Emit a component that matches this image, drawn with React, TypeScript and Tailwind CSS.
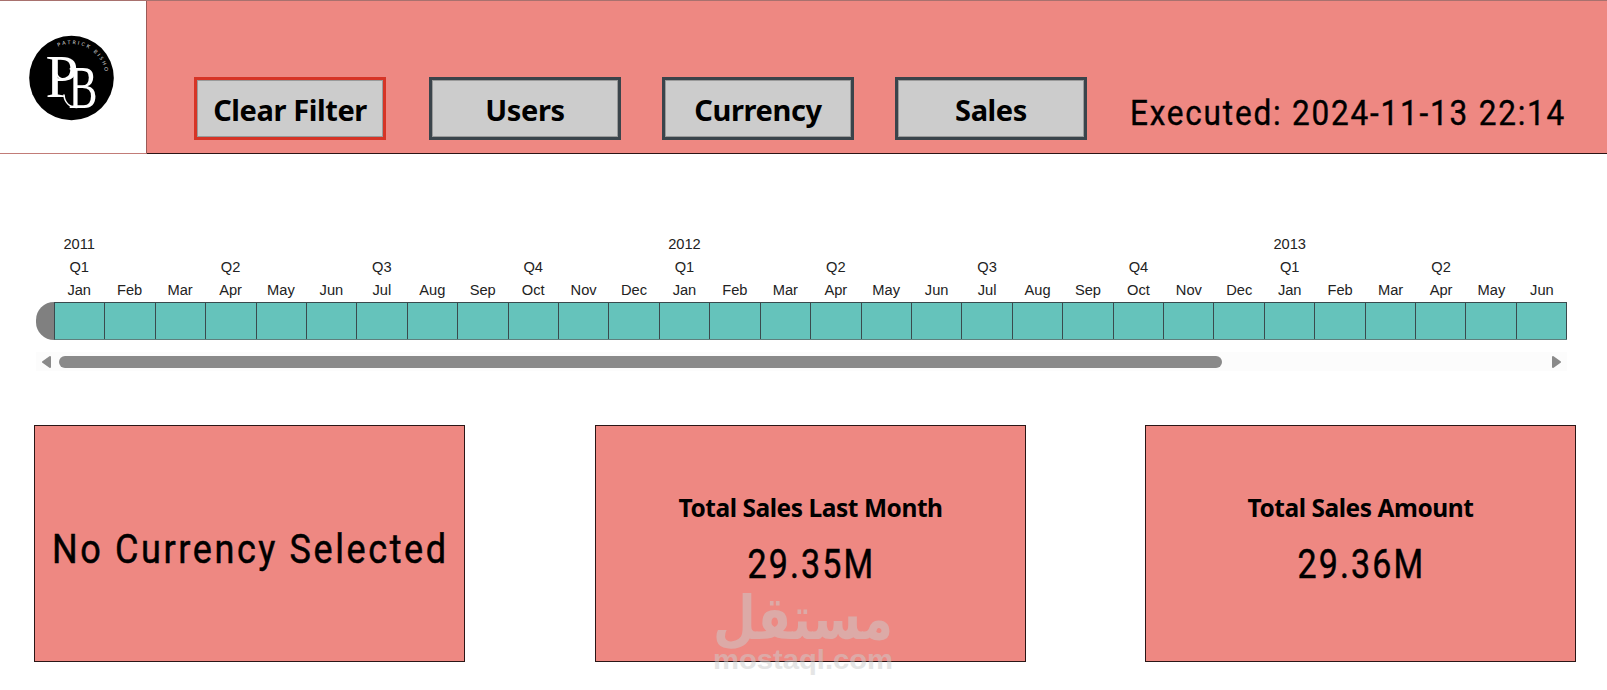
import React from 'react';

const months = ['Jan', 'Feb', 'Mar', 'Apr', 'May', 'Jun', 'Jul', 'Aug', 'Sep', 'Oct', 'Nov', 'Dec'];

const cells = Array.from({ length: 30 }, (_, i) => ({
    year: i % 12 === 0 ? String(2011 + i / 12) : '',
    quarter: i % 3 === 0 ? `Q${Math.floor((i % 12) / 3) + 1}` : '',
    month: months[i % 12],
}));

const buttons = [
    { label: 'Clear Filter', className: 'border-[#d63426] mr-[43px]' },
    { label: 'Users', className: 'border-[#3a444b] mr-[41px]' },
    { label: 'Currency', className: 'border-[#3a444b] mr-[41px]' },
    { label: 'Sales', className: 'border-[#3a444b]' },
];

function Logo() {
    return (
        <svg className="w-[146px] h-[152px]" viewBox="0 0 146 152">
            <defs>
                <path id="rim" d="M 37.5 77 A 34 34 0 0 1 105.5 77" />
            </defs>
            <circle cx="71.5" cy="77" r="42.3" fill="#000" />
            <g fill="#fff" fontFamily="Liberation Serif, serif">
                <text x="45.5" y="95.5" fontSize="61" textLength="33" lengthAdjust="spacingAndGlyphs">P</text>
                <text x="68.5" y="107" fontSize="61" textLength="29" lengthAdjust="spacingAndGlyphs">B</text>
            </g>
            <g fill="none" stroke="#fff" strokeLinecap="round">
                <path d="M57 73.5C59 78.5 66 80 72 76" strokeWidth="1.6" />
                <path d="M64 94C64.5 101 69 106 77 106.5" strokeWidth="1.6" />
            </g>
            <text fontSize="5" fill="#ddd" fontFamily="Lato, sans-serif" letterSpacing="2">
                <textPath href="#rim" startOffset="39.5">PATRICK BISHO</textPath>
            </text>
        </svg>
    );
}

function Header() {
    return (
        <header className="flex h-[154px] border-t border-[#a8716e]">
            <div className="w-[147px] bg-white border-r border-r-[#9a5b58] border-b border-b-[#c27c78]">
                <Logo />
            </div>
            <div className="flex-1 flex bg-[#ee8882] border-b border-[#2b1415] pl-[47px] pt-[76px]">
                <div className="flex">
                    {buttons.map((button) => (
                        <button key={button.label} className={`w-[192px] h-[63px] border-3 pt-[2px] bg-[#cccccc] shadow-[inset_0_0_0_1px_#9a9a9a] font-['Noto_Sans'] font-bold text-[29px] leading-[55px] tracking-[-0.4px] whitespace-nowrap ${button.className}`}>
                            {button.label}
                        </button>
                    ))}
                </div>
                <p className="ml-[42.5px] mt-[16px] font-[Roboto] text-[35px] leading-[42px] tracking-[2px] whitespace-nowrap origin-left scale-x-90 [-webkit-text-stroke:0.4px_black]">Executed: 2024-11-13 22:14</p>
            </div>
        </header>
    );
}

function Timeline() {
    return (
        <section className="mt-[79px] ml-[36px] w-[1531px]">
            <div className="flex pl-[18px] text-[14.67px] leading-[23px] font-['Liberation_Sans'] text-[#222]">
                {cells.map((cell, index) => (
                    <div key={index} className="flex-1 text-center">
                        <p className="h-[23px]">{cell.year}</p>
                        <p className="h-[23px]">{cell.quarter}</p>
                        <p className="h-[23px]">{cell.month}</p>
                    </div>
                ))}
            </div>
            <div className="flex h-[38px]">
                <div className="w-[18px] rounded-l-full bg-[#808080]" />
                <div className="flex-1 flex border-l border-y border-[#3a4a4d] border-b-[#5f7f7d]">
                    {cells.map((cell, index) => (
                        <div key={index} className="flex-1 bg-[#65c3bb] border-r border-[#3a4a4d]" />
                    ))}
                </div>
            </div>
            <div className="mt-[12px] h-[19px] bg-[#fcfcfc] flex items-center px-[6px]">
                <svg className="w-[9px] h-[12px]" viewBox="0 0 9 12"><path d="M8 1L1 6L8 11Z" fill="#8a8a8a" stroke="#8a8a8a" strokeWidth="2" strokeLinejoin="round" /></svg>
                <div className="ml-[8px] w-[1163px] h-[12px] rounded-full bg-[#8a8a8a]" />
                <svg className="ml-auto w-[9px] h-[12px]" viewBox="0 0 9 12"><path d="M1 1L8 6L1 11Z" fill="#8a8a8a" stroke="#8a8a8a" strokeWidth="2" strokeLinejoin="round" /></svg>
            </div>
        </section>
    );
}

function Card({ title, value }: { title: string; value: string }) {
    return (
        <div className="w-[431px] h-[237px] border border-[#2a1616] bg-[#ee8882] pt-[64px] text-center">
            <h2 className="font-['Noto_Sans'] font-bold text-[24.5px] leading-[36px] tracking-[-0.45px] whitespace-nowrap">{title}</h2>
            <p className="mt-[15px] pl-[2px] font-[Roboto] text-[40px] leading-[48px] tracking-[2.5px] scale-x-85 [-webkit-text-stroke:0.5px_black]">{value}</p>
        </div>
    );
}

function Watermark() {
    return (
        <svg className="absolute left-[713px] top-[585px] w-[180px] h-[100px] opacity-50 overflow-visible" viewBox="0 0 180 100" fill="#cccccc">
            <text x="0" y="54" fontSize="60" fontWeight="bold" fontFamily="DejaVu Sans, sans-serif" direction="rtl" textAnchor="end" textLength="180" lengthAdjust="spacingAndGlyphs">مستقل</text>
            <text x="0" y="84" fontSize="28.5" fontWeight="bold" fontFamily="Liberation Sans, sans-serif" textLength="180" lengthAdjust="spacingAndGlyphs">mostaql.com</text>
        </svg>
    );
}

export default function App() {
    return (
        <div className="relative w-[1607px] h-[690px] overflow-hidden bg-white text-black">
            <Header />
            <Timeline />
            <main className="flex pl-[34px] mt-[54px]">
                <div className="w-[431px] h-[237px] border border-[#2a1616] bg-[#ee8882] pt-[100px] flex justify-center">
                    <p className="pl-[2px] font-[Roboto] text-[40px] leading-[48px] tracking-[2.9px] whitespace-nowrap scale-x-90 [-webkit-text-stroke:0.5px_black]">No Currency Selected</p>
                </div>
                <div className="ml-[130px]"><Card title="Total Sales Last Month" value="29.35M" /></div>
                <div className="ml-[119px]"><Card title="Total Sales Amount" value="29.36M" /></div>
            </main>
            <Watermark />
        </div>
    );
}
